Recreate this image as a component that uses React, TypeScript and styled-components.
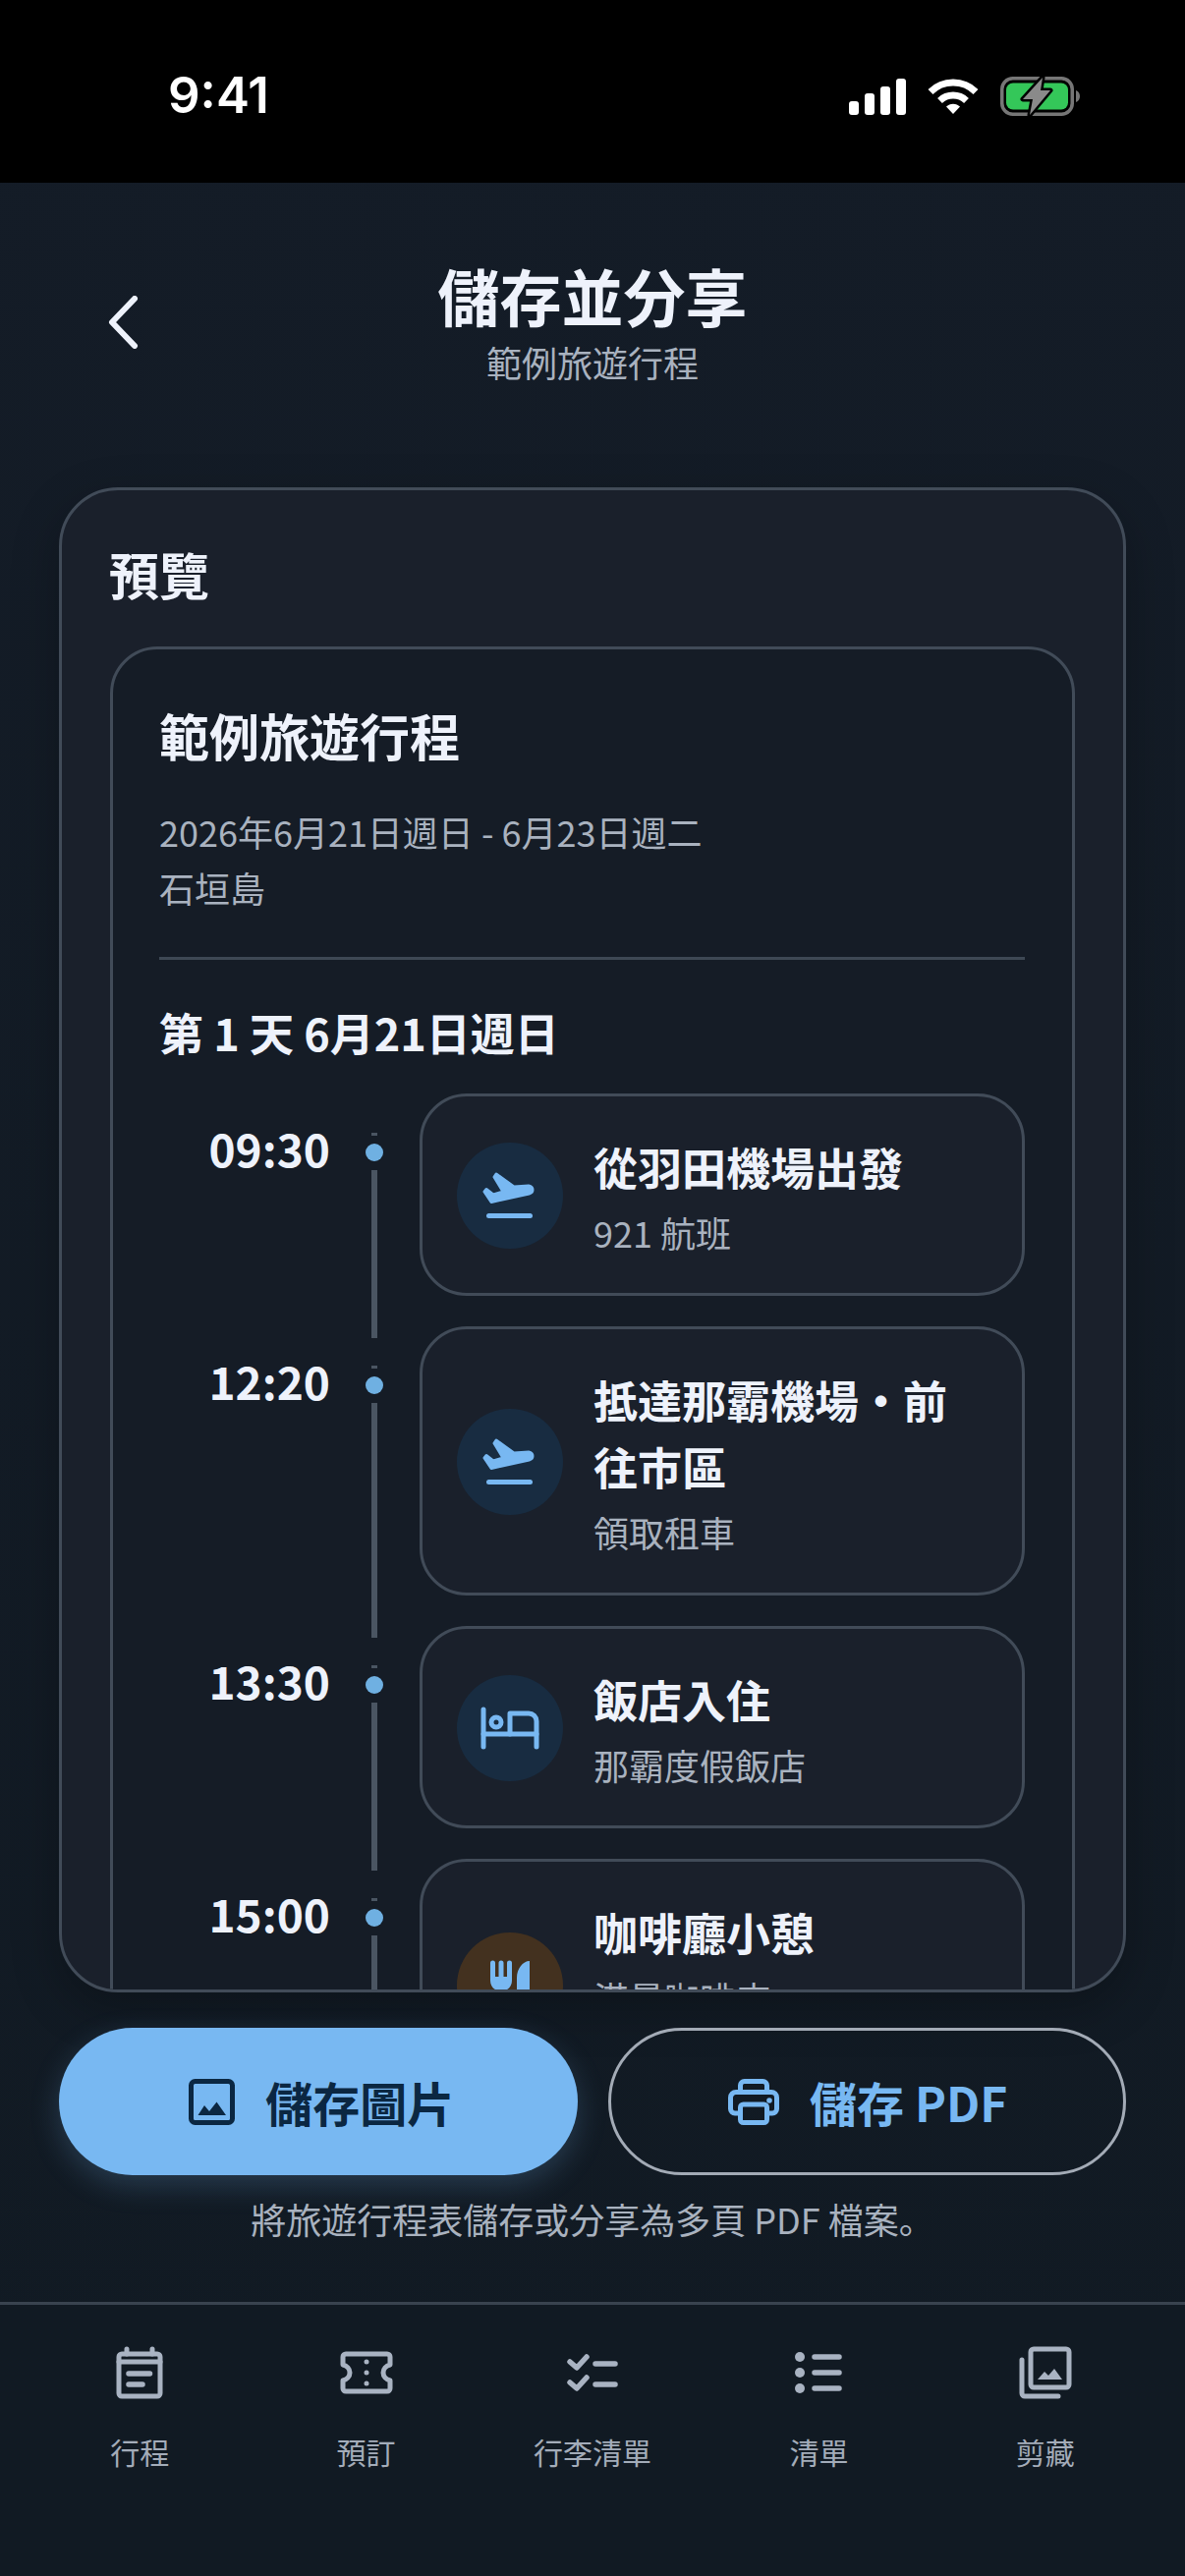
import React from 'react';
import styled, { createGlobalStyle } from 'styled-components';

const CJK = '"Noto Sans CJK JP", "Noto Sans CJK TC", "Noto Sans", sans-serif';
const ACCENT = '#78b8f2';
const INK = '#0b2742';

const Global = createGlobalStyle`
  html, body { margin: 0; padding: 0; background: #141c27; }
  * { box-sizing: border-box; }
`;

const Screen = styled.div`
  width: 1206px;
  height: 2622px;
  display: flex;
  flex-direction: column;
  overflow: hidden;
  font-family: ${CJK};
  background: linear-gradient(#141c27, #111a23);
  color: #f0f4fb;
`;

const StatusBar = styled.div`
  height: 186px;
  flex: none;
  background: #000;
  display: flex;
  align-items: flex-start;
  justify-content: space-between;
  padding: 66px 106px 0 171px;
`;

const Clock = styled.div`
  font-family: Inter, sans-serif;
  font-weight: 600;
  font-size: 51px;
  line-height: 62px;
  color: #fff;
`;

const StatusIcons = styled.div`
  display: flex;
  align-items: center;
  gap: 22px;
  margin-top: 11px;
`;

const Header = styled.header`
  height: 310px;
  flex: none;
  position: relative;
  display: flex;
  flex-direction: column;
  align-items: center;
  padding-top: 71px;
`;

const BackButton = styled.div`
  position: absolute;
  left: 107px;
  top: 115px;
  display: flex;
`;

const Title = styled.h1`
  margin: 0;
  font-size: 63px;
  line-height: 86px;
  font-weight: 700;
  color: #eef2fb;
`;

const Subtitle = styled.div`
  font-size: 36px;
  line-height: 50px;
  color: #a9b2bf;
`;

const Preview = styled.section`
  flex: none;
  height: 1532px;
  margin: 0 60px;
  padding: 50px 49px 0;
  border: 3px solid #414b58;
  border-radius: 60px;
  background: #1a202b;
  box-shadow: 0 16px 48px rgba(0, 0, 0, 0.25);
  overflow: hidden;
  display: flex;
  flex-direction: column;
`;

const PreviewLabel = styled.h2`
  margin: 0 0 39px -1px;
  font-size: 51px;
  line-height: 70px;
  font-weight: 700;
  color: #eef2fb;
`;

const Sheet = styled.div`
  flex: 1;
  min-height: 0;
  margin-bottom: -60px;
  padding: 52px 48px 0 47px;
  border: 3px solid #414b58;
  border-radius: 48px;
  background: #151c26;
`;

const TripName = styled.div`
  font-size: 51px;
  line-height: 70px;
  font-weight: 700;
  color: #eef2fb;
`;

const TripMeta = styled.div`
  margin-top: 35px;
  font-size: 36px;
  line-height: 57px;
  color: #a9b2bf;
`;

const Rule = styled.hr`
  margin: 42px 0 0;
  border: 0;
  height: 3px;
  background: #3e4854;
`;

const DayTitle = styled.div`
  margin-top: 42px;
  font-size: 45px;
  line-height: 64px;
  font-weight: 700;
  color: #eef2fb;
`;

const Timeline = styled.div`
  margin-top: 30px;
  display: flex;
  flex-direction: column;
`;

const Row = styled.div`
  display: flex;
  align-items: stretch;
  padding-bottom: 31px;
`;

const Time = styled.div`
  width: 174px;
  flex: none;
  margin-top: 23px;
  text-align: right;
  font-size: 46px;
  line-height: 64px;
  font-weight: 700;
  color: #eef2fb;
`;

const Rail = styled.div`
  width: 18px;
  flex: none;
  margin-left: 36px;
  margin-right: 37px;
  display: flex;
  flex-direction: column;
  align-items: center;
  padding-top: 40px;
`;

const RailTick = styled.div`
  width: 6px;
  height: 3px;
  background: #4a5562;
`;

const RailDot = styled.div`
  width: 18px;
  height: 18px;
  margin-top: 8px;
  border-radius: 50%;
  background: #6fb0e2;
`;

const RailLine = styled.div`
  width: 6px;
  flex: 1;
  margin-top: 9px;
  margin-bottom: -43px;
  background: #4a5562;
`;

const EventCard = styled.div`
  flex: 1;
  min-width: 0;
  display: flex;
  align-items: center;
  gap: 31px;
  padding: 38px 35px 37px;
  border: 3px solid #414b58;
  border-radius: 48px;
  background: #1a202b;
`;

const IconCircle = styled.div<{ $tone: 'blue' | 'amber' }>`
  width: 108px;
  height: 108px;
  flex: none;
  margin-top: 1px;
  border-radius: 50%;
  display: flex;
  align-items: center;
  justify-content: center;
  background: ${(p) => (p.$tone === 'amber' ? '#43311f' : '#182c41')};
`;

const EventText = styled.div`
  min-width: 0;
  flex: 1;
`;

const EventTitle = styled.div`
  font-size: 45px;
  line-height: 68px;
  font-weight: 700;
  color: #eef2fb;
`;

const EventSub = styled.div`
  margin-top: 7px;
  font-size: 36px;
  line-height: 50px;
  color: #a9b2bf;
`;

const Actions = styled.div`
  flex: none;
  margin: 36px 60px 0;
  display: grid;
  grid-template-columns: 1fr 1fr;
  gap: 31px;
`;

const ActionButton = styled.div<{ $primary?: boolean }>`
  height: 150px;
  padding-left: ${(p) => (p.$primary ? '7px' : '2px')};
  border-radius: 75px;
  display: flex;
  align-items: center;
  justify-content: center;
  gap: 31px;
  font-size: 48px;
  font-weight: 700;
  border: ${(p) => (p.$primary ? '0' : '3px solid #a3abb6')};
  background: ${(p) => (p.$primary ? ACCENT : 'transparent')};
  color: ${(p) => (p.$primary ? INK : ACCENT)};
  box-shadow: ${(p) => (p.$primary ? '0 10px 30px rgba(120, 184, 242, 0.22)' : 'none')};
`;

const Hint = styled.div`
  flex: none;
  margin-top: 18px;
  text-align: center;
  font-size: 36px;
  line-height: 52px;
  color: #a9b2bf;
`;

const NavBar = styled.nav`
  flex: 1;
  margin-top: 59px;
  border-top: 3px solid #39434f;
  background: #111a23;
  padding: 41px 27px 0;
  display: grid;
  grid-template-columns: repeat(5, 1fr);
  align-items: start;
`;

const NavItem = styled.div`
  display: flex;
  flex-direction: column;
  align-items: center;
  color: #a9b3c2;
`;

const NavIcon = styled.div`
  height: 56px;
  display: flex;
  align-items: center;
  justify-content: center;
`;

const NavLabel = styled.div`
  margin-top: 31px;
  font-size: 30px;
  line-height: 42px;
  color: #a3acb9;
`;

/* status bar glyphs */
const Signal = () => (
  <svg width="58" height="37" viewBox="0 0 58 37" fill="#fff">
    <rect x="0" y="23" width="10" height="14" rx="3" />
    <rect x="16" y="15" width="10" height="22" rx="3" />
    <rect x="32" y="8" width="10" height="29" rx="3" />
    <rect x="48" y="0" width="10" height="37" rx="3" />
  </svg>
);

const Wifi = () => (
  <svg width="52" height="37" viewBox="0 0 52 37" fill="none" stroke="#fff" strokeWidth="7">
    <path d="M3 13.5C9 7.5 17 4 26 4s17 3.5 23 9.5" />
    <path d="M12.5 22.5c3.6-3.4 8.3-5.4 13.5-5.4s9.9 2 13.5 5.4" />
    <path d="M19 28.5 26 36l7-7.5c-1.8-1.7-4.3-2.8-7-2.8s-5.2 1.1-7 2.8z" fill="#fff" stroke="none" />
  </svg>
);

const Battery = () => (
  <svg width="82" height="42" viewBox="0 0 82 42" fill="none">
    <rect x="1.75" y="2.75" width="71.5" height="36.5" rx="11" stroke="#767676" strokeWidth="3.5" />
    <path d="M77 15c3 1 4 3.5 4 6s-1 5-4 6z" fill="#767676" />
    <rect x="6" y="7.5" width="63" height="27" rx="7" fill="#34c759" />
    <path
      d="M43 2 23 24h10l-3 16 21-25H41z"
      fill="#8a8a8a"
      stroke="#000"
      strokeWidth="5"
      strokeLinejoin="round"
      paintOrder="stroke"
    />
  </svg>
);

const Chevron = () => (
  <svg width="36" height="54" viewBox="0 0 36 54" fill="none" stroke="#eef2fb" strokeWidth="6" strokeLinecap="round" strokeLinejoin="round">
    <path d="M30 3 7 27l23 24" />
  </svg>
);

/* event icons */
const Takeoff = () => (
  <svg width="56" height="52" viewBox="0 0 56 52" fill={ACCENT}>
    <path
      d="M2 22 4 19.5 11 25 21 22 12 7 14 4 32 17 47 16Q51 17 51 20Q51 23 47.5 24L9 32.5Z"
      stroke={ACCENT}
      strokeWidth="3"
      strokeLinejoin="round"
    />
    <rect x="4" y="44" width="47" height="5" rx="2.5" />
  </svg>
);

const Bed = () => (
  <svg width="60" height="44" viewBox="0 0 60 44" fill="none" stroke={ACCENT} strokeWidth="5" strokeLinecap="round" strokeLinejoin="round">
    <path d="M3 3v38" />
    <path d="M3 28h54" />
    <path d="M57 41V15a8 8 0 0 0-8-8H30v21" />
    <circle cx="16" cy="16" r="5" />
  </svg>
);

const Cutlery = () => (
  <svg width="40" height="52" viewBox="0 0 40 52" fill={ACCENT}>
    <path d="M0 3a2.5 2.5 0 0 1 5 0v14h3.5V3a2.5 2.5 0 0 1 5 0v14H17V3a2.5 2.5 0 0 1 5 0v18c0 5-3 9-7.5 10v21h-7V31C3 30 0 26 0 21z" />
    <path d="M40 1v51h-7V33h-6V18C27 9 33 1 40 1z" />
  </svg>
);

/* action icons */
const ImageIcon = () => (
  <svg width="47" height="47" viewBox="0 0 47 47" fill="none">
    <rect x="2.5" y="2.5" width="42" height="42" rx="4" stroke={INK} strokeWidth="5" />
    <path d="m9.5 37 6.5-10 5 6 7.5-9.5L38 37z" fill={INK} />
  </svg>
);

const Printer = () => (
  <svg width="52" height="47" viewBox="0 0 52 47" fill="none" stroke={ACCENT} strokeWidth="5" strokeLinejoin="round">
    <path d="M12.5 14V6.5a4 4 0 0 1 4-4h19a4 4 0 0 1 4 4V14" />
    <path d="M12.5 35H7a4.5 4.5 0 0 1-4.5-4.5V19A5.5 5.5 0 0 1 8 13.5h36a5.5 5.5 0 0 1 5.5 5.5v11.5A4.5 4.5 0 0 1 45 35h-5.5" />
    <rect x="12.5" y="26" width="27" height="18.5" rx="3" />
    <circle cx="42" cy="22" r="2.8" fill={ACCENT} stroke="none" />
  </svg>
);

/* navigation icons */
const NavCalendar = () => (
  <svg width="48" height="54" viewBox="0 0 48 54" fill="none" stroke="currentColor" strokeWidth="5" strokeLinecap="round" strokeLinejoin="round">
    <rect x="3" y="8" width="42" height="43" rx="3" />
    <path d="M3 16h42" />
    <path d="M11 3v5M37 3v5" />
    <path d="M13 28h21.5M13 39h14" strokeWidth="5.5" />
  </svg>
);

const NavTicket = () => (
  <svg width="54" height="44" viewBox="0 0 54 44" fill="none" stroke="currentColor" strokeWidth="5" strokeLinejoin="round">
    <path d="M6 3h42a3 3 0 0 1 3 3v8c-4 1-7 4-7 8s3 7 7 8v8a3 3 0 0 1-3 3H6a3 3 0 0 1-3-3v-8c4-1 7-4 7-8s-3-7-7-8V6a3 3 0 0 1 3-3z" />
    <g fill="currentColor" stroke="none">
      <circle cx="27" cy="11" r="2.5" />
      <circle cx="27" cy="22" r="2.5" />
      <circle cx="27" cy="33" r="2.5" />
    </g>
  </svg>
);

const NavChecks = () => (
  <svg width="52" height="38" viewBox="0 0 52 38" fill="none" stroke="currentColor" strokeWidth="5.5" strokeLinecap="round" strokeLinejoin="round">
    <path d="m3 8 7 6L20 3M3 29l7 6 10-11" />
    <path d="M29 10h20M29 31h20" />
  </svg>
);

const NavList = () => (
  <svg width="48" height="42" viewBox="0 0 48 42" fill="none" stroke="currentColor" strokeWidth="5.5" strokeLinecap="round">
    <g fill="currentColor" stroke="none">
      <circle cx="5" cy="5" r="5" />
      <circle cx="5" cy="21" r="5" />
      <circle cx="5" cy="37" r="5" />
    </g>
    <path d="M20 5h25M20 21h25M20 37h25" />
  </svg>
);

const NavGallery = () => (
  <svg width="54" height="54" viewBox="0 0 54 54" fill="none" stroke="currentColor" strokeWidth="5" strokeLinecap="round" strokeLinejoin="round">
    <rect x="12" y="3" width="39" height="39" rx="3" />
    <path d="M3 14v34a3 3 0 0 0 3 3h34" />
    <path d="m19 34 7-8 4 4 6-7 8 11z" fill="currentColor" stroke="none" />
  </svg>
);

type EventItem = {
  time: string;
  title: string;
  sub: string[];
  tone: 'blue' | 'amber';
  icon: React.ReactNode;
};

const events: EventItem[] = [
  { time: '09:30', title: '從羽田機場出發', sub: ['921 航班'], tone: 'blue', icon: <Takeoff /> },
  { time: '12:20', title: '抵達那霸機場・前往市區', sub: ['領取租車'], tone: 'blue', icon: <Takeoff /> },
  { time: '13:30', title: '飯店入住', sub: ['那霸度假飯店'], tone: 'blue', icon: <Bed /> },
  { time: '15:00', title: '咖啡廳小憩', sub: ['港景咖啡店', '午後休息'], tone: 'amber', icon: <Cutlery /> },
];

const navItems = [
  { label: '行程', icon: <NavCalendar /> },
  { label: '預訂', icon: <NavTicket /> },
  { label: '行李清單', icon: <NavChecks /> },
  { label: '清單', icon: <NavList /> },
  { label: '剪藏', icon: <NavGallery /> },
];

export default function App() {
  return (
    <Screen>
      <Global />
      <StatusBar>
        <Clock>9:41</Clock>
        <StatusIcons>
          <Signal />
          <Wifi />
          <Battery />
        </StatusIcons>
      </StatusBar>

      <Header>
        <BackButton>
          <Chevron />
        </BackButton>
        <Title>儲存並分享</Title>
        <Subtitle>範例旅遊行程</Subtitle>
      </Header>

      <Preview>
        <PreviewLabel>預覽</PreviewLabel>
        <Sheet>
          <TripName>範例旅遊行程</TripName>
          <TripMeta>
            2026年6月21日週日 - 6月23日週二
            <br />
            石垣島
          </TripMeta>
          <Rule />
          <DayTitle>第 1 天 6月21日週日</DayTitle>
          <Timeline>
            {events.map((e) => (
              <Row key={e.time}>
                <Time>{e.time}</Time>
                <Rail>
                  <RailTick />
                  <RailDot />
                  <RailLine />
                </Rail>
                <EventCard>
                  <IconCircle $tone={e.tone}>{e.icon}</IconCircle>
                  <EventText>
                    <EventTitle>{e.title}</EventTitle>
                    <EventSub>
                      {e.sub.map((line) => (
                        <div key={line}>{line}</div>
                      ))}
                    </EventSub>
                  </EventText>
                </EventCard>
              </Row>
            ))}
          </Timeline>
        </Sheet>
      </Preview>

      <Actions>
        <ActionButton $primary>
          <ImageIcon />
          儲存圖片
        </ActionButton>
        <ActionButton>
          <Printer />
          儲存 PDF
        </ActionButton>
      </Actions>
      <Hint>將旅遊行程表儲存或分享為多頁 PDF 檔案。</Hint>

      <NavBar>
        {navItems.map((n) => (
          <NavItem key={n.label}>
            <NavIcon>{n.icon}</NavIcon>
            <NavLabel>{n.label}</NavLabel>
          </NavItem>
        ))}
      </NavBar>
    </Screen>
  );
}
